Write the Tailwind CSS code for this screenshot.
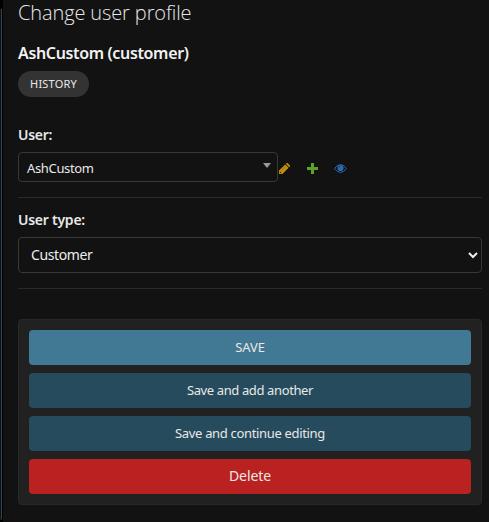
<!DOCTYPE html>
<html lang="en">
<head>
<meta charset="utf-8">
<title>Change user profile</title>
<script src="https://cdn.jsdelivr.net/npm/@tailwindcss/browser@4"></script>
</head>
<body class="flex h-[522px] w-[489px] overflow-hidden bg-[#121212] font-['Noto_Sans','Open_Sans',sans-serif] text-[#e8e8e8]">
  <div class="h-full w-[3px] shrink-0 bg-black pt-[9px]">
    <div class="h-[511px] w-[2px] rounded-br-sm border-r border-[#3a444b] bg-[#05131b]"></div>
  </div>
  <main class="flex h-full w-[479px] shrink-0 flex-col pl-[15px]">
    <h1 class="h-[26px] whitespace-nowrap font-['Open_Sans'] text-[20px] leading-[26px] font-light tracking-[-0.12px] text-[#e8e8e8]">Change user profile</h1>
    <h2 class="mt-[16px] h-[22px] whitespace-nowrap text-[16px] leading-[22px] font-semibold tracking-[-0.35px] text-[#f2f2f2]">AshCustom (customer)</h2>
    <a class="mt-[7px] flex h-[26px] w-[71px] items-center justify-center rounded-full bg-[#333333] text-[11px] tracking-[0.2px]">HISTORY</a>
    <label class="mt-[28px] h-[20px] whitespace-nowrap text-[14px] leading-[20px] font-semibold tracking-[-0.3px]">User:</label>
    <div class="mt-[7px] flex h-[30px] items-center">
      <div class="flex h-[30px] w-[260px] items-center justify-between rounded-[4px] border border-[#383838] pr-[6px] pl-[8px] text-[13px] tracking-[-0.35px]">
        <span class="pt-[3px]">AshCustom</span>
        <svg class="mb-[3px] h-[5px] w-[8px]" viewBox="0 0 8 5" fill="#999999"><path d="M0 0h8L4 5z"/></svg>
      </div>
      <svg class="mt-[2px] ml-px h-[11px] w-[11px]" viewBox="0 0 11 11"><path fill="#c1900c" d="M0 11V7.6L6.2 1.4l3.4 3.4L3.4 11zM6.8.8l.6-.6q.6-.5 1.3 0L10.8 2.3q.5.6 0 1.3l-.6.6z"/><path d="M1 8.5 2.5 10 1.7 10.2.8 9.3z" fill="#121212"/><path d="M2.6 7.4 6.5 3.5" stroke="#806010" stroke-width=".6"/></svg>
      <svg class="mt-[2px] ml-[17px] h-[11px] w-[11px]" viewBox="0 0 11 11"><path fill="#5fa225" d="M4 0h3v4h4v3H7v4H4V7H0V4h4z"/></svg>
      <svg class="mt-[3px] ml-[16px] h-[9px] w-[13px]" viewBox="0 0 13 9" fill="none" stroke="#2b69b0"><path d="M.6 4.5Q3 .6 6.5.6t5.9 3.9Q10 8.4 6.5 8.4T.6 4.5z"/><circle cx="6.5" cy="4" r="3.1" fill="#2b69b0" stroke="none"/><path d="M5 3.8Q5 2.3 6.5 2.3" stroke="#152b45" stroke-width=".6"/></svg>
    </div>
    <div class="mt-[15px] h-px shrink-0 bg-[#2a2a2a]"></div>
    <label class="mt-[12px] h-[20px] whitespace-nowrap text-[14px] leading-[20px] font-semibold tracking-[-0.25px]">User type:</label>
    <select class="mt-[7px] h-[36px] w-[464px] shrink-0 rounded-[4px] border border-[#383838] bg-[#121212] pb-[2px] pl-[8px] text-[14px] tracking-[-0.4px] text-[#eeeeee]">
      <option>Customer</option>
    </select>
    <div class="mt-[15px] h-px shrink-0 bg-[#2a2a2a]"></div>
    <div class="mt-[30px] flex h-[186px] shrink-0 flex-col gap-2 rounded-[4px] border border-[#282828] bg-[#212121] p-[10px] text-[13px]">
      <button class="h-[35px] rounded-[4px] bg-[#417893] tracking-[-0.1px]">SAVE</button>
      <button class="h-[35px] rounded-[4px] bg-[#264b5d] tracking-[-0.38px]">Save and add another</button>
      <button class="h-[35px] rounded-[4px] bg-[#264b5d] tracking-[-0.33px]">Save and continue editing</button>
      <button class="h-[35px] rounded-[4px] bg-[#ba2121] pb-[2px] text-[14px] tracking-[-0.1px]">Delete</button>
    </div>
  </main>
</body>
</html>
